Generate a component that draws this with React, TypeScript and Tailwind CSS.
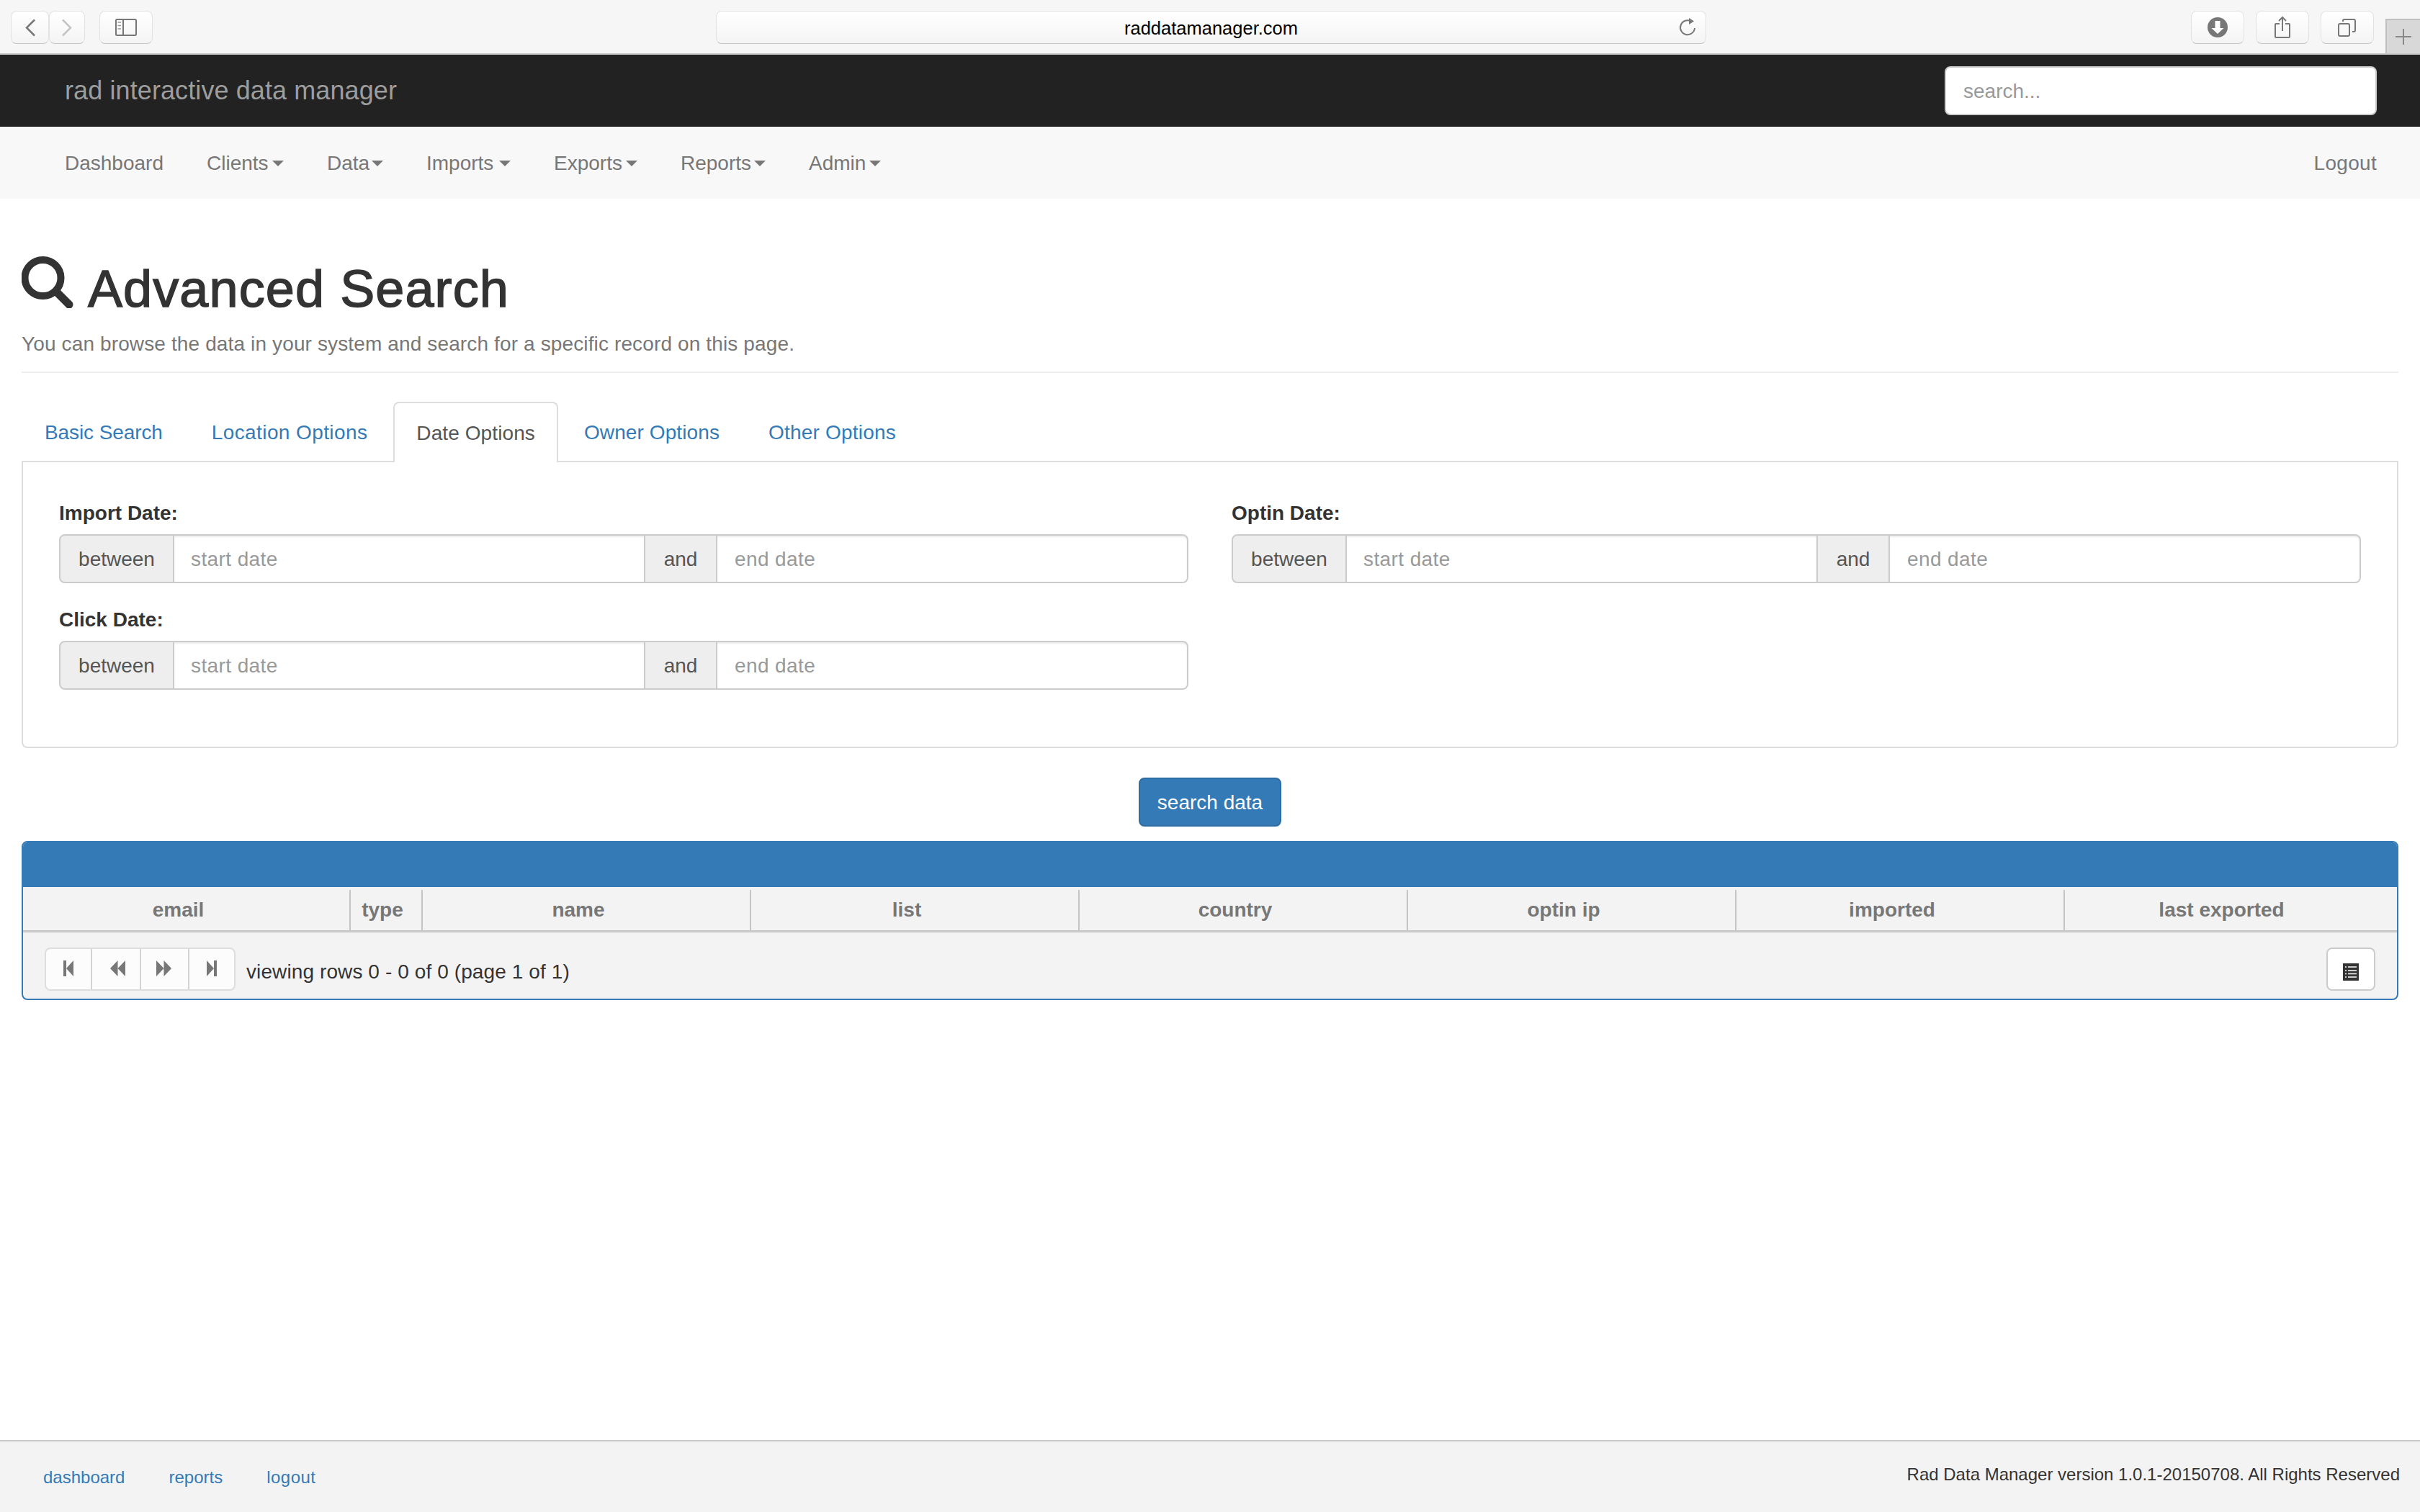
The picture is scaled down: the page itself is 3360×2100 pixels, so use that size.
const navItems = [
  { label: "Clients", width: "w-[107px]" },
  { label: "Data", width: "w-[78px]" },
  { label: "Imports", width: "w-[117px]" },
  { label: "Exports", width: "w-[116px]" },
  { label: "Reports", width: "w-[118px]" },
  { label: "Admin", width: "w-[100px]" },
];

const tabs = [
  { label: "Basic Search", spacing: "tracking-[-0.1px]" },
  { label: "Location Options", spacing: "tracking-[0.4px]" },
  { label: "Date Options", spacing: "tracking-[0.1px]" },
  { label: "Owner Options", spacing: "tracking-[0.1px]" },
  { label: "Other Options", spacing: "tracking-[0.2px]" },
];

const columns = [
  { label: "email", box: "w-[455px] pr-[22px] border-r-2" },
  { label: "type", box: "w-[100px] pr-[10px] border-r-2" },
  { label: "name", box: "w-[456px] pr-[22px] border-r-2" },
  { label: "list", box: "w-[456px] pr-[22px] border-r-2" },
  { label: "country", box: "w-[456px] pr-[22px] border-r-2" },
  { label: "optin ip", box: "w-[456px] pr-[22px] border-r-2" },
  { label: "imported", box: "w-[456px] pr-[22px] border-r-2" },
  { label: "last exported", box: "flex-1 pr-[26px]" },
];

const DateRange = ({ label }: { label: string }) => (
  <div>
    <label className="block text-[28px] leading-[40px] font-bold text-[#333] mb-[9px]">{label}</label>
    <div className="flex h-[68px] text-[28px] text-[#555]">
      <span className="w-[160px] shrink-0 pt-[2px] flex items-center justify-center border-2 border-[#ccc] bg-[#eee] rounded-l-lg">between</span>
      <input
        placeholder="start date"
        className="w-[652px] shrink-0 pt-[2px] border-y-2 border-[#ccc] pl-[23px] tracking-[0.4px] outline-none shadow-[inset_0_2px_2px_rgba(0,0,0,0.075)] placeholder:text-[#999]"
      />
      <span className="w-[102px] shrink-0 pt-[2px] flex items-center justify-center border-2 border-[#ccc] bg-[#eee]">and</span>
      <input
        placeholder="end date"
        className="flex-1 min-w-0 pt-[2px] border-y-2 border-r-2 border-[#ccc] rounded-r-lg pl-[24px] tracking-[0.4px] outline-none shadow-[inset_0_2px_2px_rgba(0,0,0,0.075)] placeholder:text-[#999]"
      />
    </div>
  </div>
);

const ChromeButton = ({ className, children }: { className: string; children: React.ReactNode }) => (
  <div className={"h-[46px] flex items-center justify-center bg-gradient-to-b from-white to-[#f4f4f4] border border-[#e2e2e2] border-b-[#c4c4c4] rounded-lg " + className}>
    {children}
  </div>
);

const App = () => {
  return (
    <div className="min-h-screen flex flex-col bg-white font-['Liberation_Sans',Arial,sans-serif] text-[#333]">
      {/* browser toolbar */}
      <div className="relative h-[76px] shrink-0 bg-[#f6f6f6] border-b-2 border-[#c8c8c8] pt-[15px] pl-[15px] pr-[64px] flex">
        <ChromeButton className="w-[53px]">
          <svg width="16" height="25" viewBox="0 0 16 25" fill="none" stroke="#777" strokeWidth="2.5">
            <path d="M14 1.5L3 12.5l11 11" />
          </svg>
        </ChromeButton>
        <ChromeButton className="w-[50px]">
          <svg width="16" height="25" viewBox="0 0 16 25" fill="none" stroke="#c4c4c4" strokeWidth="2.5">
            <path d="M2 1.5l11 11-11 11" />
          </svg>
        </ChromeButton>
        <ChromeButton className="w-[74px] ml-[20px]">
          <svg width="30" height="24" viewBox="0 0 30 24" fill="none" stroke="#777" strokeWidth="2">
            <rect x="1" y="1" width="28" height="22" rx="1.5" />
            <path d="M11 1v22" />
            <path d="M3.5 5h4.5M3.5 9.5h4.5M3.5 14h4.5" stroke="#999" strokeWidth="1.5" />
          </svg>
        </ChromeButton>
        <ChromeButton className="w-[1375px] ml-[782px] relative">
          <span className="pt-[2px] text-[25.5px] text-black">raddatamanager.com</span>
          <svg className="absolute right-[12px] top-[8px]" width="26" height="28" viewBox="0 0 26 28" fill="none" stroke="#777" strokeWidth="2">
            <path d="M18 5.5A10 10 0 1 0 23 15" />
            <path d="M15 1l7 4.5-7 4.5z" fill="#777" stroke="none" />
          </svg>
        </ChromeButton>
        <ChromeButton className="w-[74px] ml-auto">
          <svg width="28" height="28" viewBox="0 0 28 28">
            <circle cx="14" cy="14" r="14" fill="#777" />
            <path d="M10.5 5h7v10h5L14 23 5.5 15h5z" fill="#fff" />
          </svg>
        </ChromeButton>
        <ChromeButton className="w-[74px] ml-[16px]">
          <svg width="24" height="32" viewBox="0 0 24 32" fill="none" stroke="#777" strokeWidth="2">
            <path d="M8 11H3a1 1 0 0 0-1 1v17a1 1 0 0 0 1 1h18a1 1 0 0 0 1-1V12a1 1 0 0 0-1-1h-5" />
            <path d="M12 21V2M7 7l5-5 5 5" />
          </svg>
        </ChromeButton>
        <ChromeButton className="w-[74px] ml-[16px]">
          <svg width="26" height="25" viewBox="0 0 26 25" fill="none" stroke="#777" strokeWidth="2">
            <rect x="1" y="7" width="15" height="17" rx="2" />
            <path d="M7 4V3a2 2 0 0 1 2-2h13a2 2 0 0 1 2 2v13a2 2 0 0 1-2 2h-2" />
          </svg>
        </ChromeButton>
        <div className="absolute right-0 bottom-0 w-[48px] h-[48px] bg-[#d8d8d8] border-l-2 border-t-2 border-[#c0c0c0] flex items-center justify-center">
          <svg width="22" height="22" viewBox="0 0 22 22" stroke="#888" strokeWidth="2">
            <path d="M11 0v22M0 11h22" />
          </svg>
        </div>
      </div>

      {/* app title bar */}
      <div className="h-[100px] shrink-0 bg-[#222] flex items-center justify-between pl-[90px] pr-[60px]">
        <span className="text-[36px] tracking-[0.1px] text-[#9d9d9d]">rad interactive data manager</span>
        <input
          placeholder="search..."
          className="w-[600px] h-[68px] pt-[2px] bg-white border-2 border-[#ccc] rounded-lg px-[24px] text-[28px] outline-none placeholder:text-[#999]"
        />
      </div>

      {/* main nav */}
      <div className="h-[100px] shrink-0 bg-[#f8f8f8] flex items-center pt-[2px] pl-[90px] pr-[60px] text-[28px] text-[#777]">
        <a className="mr-[60px]">Dashboard</a>
        {navItems.map((item) => (
          <a key={item.label} className={"mr-[60px] flex items-center justify-between " + item.width}>
            {item.label}
            <span className="w-0 h-0 border-x-8 border-t-8 border-x-transparent border-t-[#777]"></span>
          </a>
        ))}
        <a className="ml-auto tracking-[0.3px]">Logout</a>
      </div>

      <div className="px-[30px]">
        <h1 className="mt-[85px] flex items-center text-[72px] leading-[80px] font-normal tracking-[1.1px] text-[#333] [-webkit-text-stroke:1.5px_#333]">
          <svg className="mr-[18px] -mt-[18px] shrink-0" width="74" height="72" viewBox="0 0 74 72" fill="none" stroke="#333">
            <circle cx="29.5" cy="30" r="25" strokeWidth="10" />
            <path d="M48 49l18 18" strokeWidth="11" strokeLinecap="round" />
          </svg>
          Advanced Search
        </h1>
        <p className="mt-[17px] text-[28px] leading-[40px] tracking-[0.13px] text-[#777]">
          You can browse the data in your system and search for a specific record on this page.
        </p>
        <hr className="mt-[18px] border-t-2 border-[#eee]" />

        <div className="mt-[40px] flex items-end gap-[4px] border-b-2 border-[#ddd] text-[28px] h-[84px]">
          {tabs.map((tab) =>
            tab.label === "Date Options" ? (
              <a key={tab.label} className={"h-[84px] -mb-[2px] pt-[2px] px-[30px] flex items-center bg-white border-2 border-b-0 border-[#ddd] rounded-t-lg text-[#555] " + tab.spacing}>
                {tab.label}
              </a>
            ) : (
              <a key={tab.label} className={"h-[84px] -mb-[2px] pt-[2px] px-[32px] flex items-center text-[#337ab7] " + tab.spacing}>
                {tab.label}
              </a>
            )
          )}
        </div>

        <div className="border-2 border-t-0 border-[#ddd] rounded-b-lg px-[50px] pt-[51px] pb-[79px] grid grid-cols-2 gap-x-[60px] gap-y-[31px]">
          <DateRange label="Import Date:" />
          <DateRange label="Optin Date:" />
          <DateRange label="Click Date:" />
        </div>

        <div className="mt-[41px] flex justify-center">
          <button className="w-[198px] h-[68px] pt-[2px] bg-[#337ab7] border-2 border-[#2e6da4] rounded-lg text-[28px] text-white">search data</button>
        </div>

        {/* results grid */}
        <div className="mt-[20px] border-2 border-[#337ab7] rounded-lg overflow-hidden bg-[#f3f3f3]">
          <div className="h-[62px] bg-[#337ab7]"></div>
          <div className="flex h-[62px] border-b-2 border-[#c5c5c5] text-[28px] font-bold text-[#777]">
            {columns.map((col) => (
              <div key={col.label} className={"mt-[4px] flex items-center justify-center border-[#c5c5c5] " + col.box}>
                {col.label}
              </div>
            ))}
          </div>
          <div className="border-t-2 border-[#e0e0e0] pt-[20px] pb-[11px] px-[30px] flex items-center">
            <div className="flex h-[60px] w-[265px] bg-[#fcfcfc] border-2 border-[#ddd] rounded-lg">
              <div className="flex-1 flex items-center justify-center border-r-2 border-[#d4d4d4] pb-[2px]">
                <svg width="14" height="22" viewBox="0 0 14 22" fill="#777"><path d="M0 0h4v22H0zM4 11L14 0v22z" /></svg>
              </div>
              <div className="flex-1 flex items-center justify-center border-r-2 border-[#d4d4d4] pb-[2px] pl-[4px]">
                <svg width="21" height="22" viewBox="0 0 21 22" fill="#777"><path d="M10.5 0v22L0 11zM21 0v22L10.5 11z" /></svg>
              </div>
              <div className="flex-1 flex items-center justify-center border-r-2 border-[#d4d4d4] pb-[2px] pr-[3px]">
                <svg width="21" height="22" viewBox="0 0 21 22" fill="#777"><path d="M0 0v22l10.5-11zM10.5 0v22L21 11z" /></svg>
              </div>
              <div className="flex-1 flex items-center justify-center pb-[2px]">
                <svg width="14" height="22" viewBox="0 0 14 22" fill="#777"><path d="M10 0h4v22h-4zM0 0l10 11L0 22z" /></svg>
              </div>
            </div>
            <span className="ml-[15px] pt-[8px] text-[28px] tracking-[0.1px] text-[#333]">viewing rows 0 - 0 of 0 (page 1 of 1)</span>
            <div className="ml-auto w-[68px] h-[60px] bg-white border-2 border-[#ccc] rounded-lg flex items-center justify-center">
              <svg className="mt-[8px]" width="22" height="24" viewBox="0 0 22 24">
                <rect width="22" height="24" fill="#333" />
                <path d="M3 5h2M7 5h12M3 10h2M7 10h12M3 14.5h2M7 14.5h12M3 19h2M7 19h12" stroke="#fff" strokeWidth="1.5" />
              </svg>
            </div>
          </div>
        </div>
      </div>

      <div className="mt-auto h-[100px] shrink-0 bg-[#f3f3f3] border-t-2 border-[#c8c8c8] flex justify-between pl-[60px] pr-[28px] text-[24px]">
        <div className="flex gap-[61px] pt-[32px] text-[#337ab7]">
          <a>dashboard</a>
          <a>reports</a>
          <a className="tracking-[0.5px]">logout</a>
        </div>
        <span className="pt-[28px] text-[#333]">Rad Data Manager version 1.0.1-20150708. All Rights Reserved</span>
      </div>
    </div>
  );
};

export default App;
